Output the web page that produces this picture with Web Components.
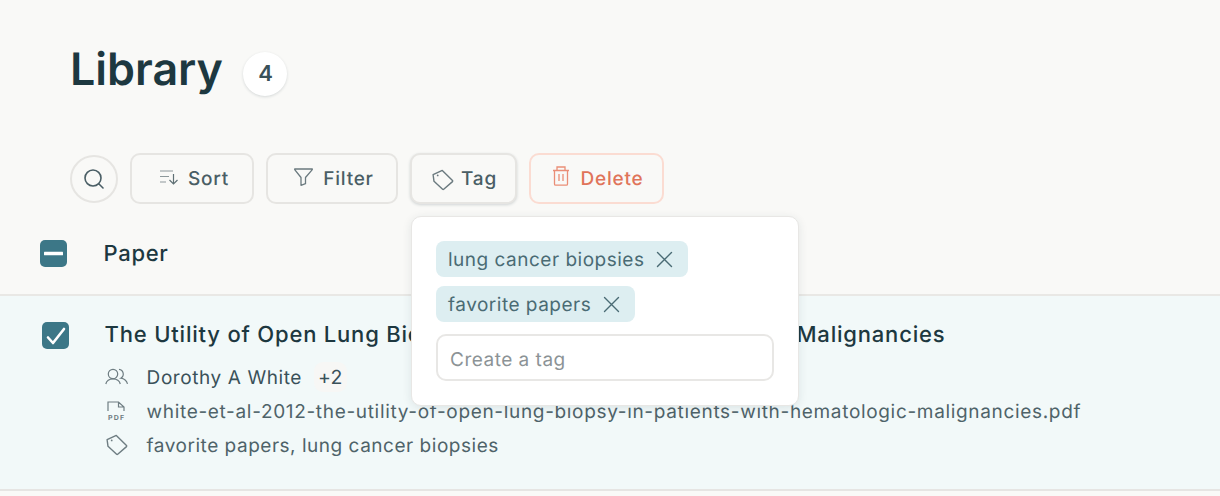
<!DOCTYPE html>
<html lang="en"><head><meta charset="utf-8"><title>Library</title>
<style>
html,body{margin:0;padding:0;background:#f9f9f7;}
body{width:1220px;height:496px;overflow:hidden;font-family:Inter,"Noto Sans",sans-serif;color:#1e3a42;text-rendering:geometricPrecision;}
</style></head><body>
<library-page></library-page>
<script>
const TAG=(w,h)=>`<svg width="${w}" height="${h}" viewBox="0 0 24 24" fill="none" stroke="currentColor" stroke-width="1.4" stroke-linejoin="round"><path d="M2.100 6.700 11.300 2.400l10.200 10.100a.8.8 0 0 1 0 1.100l-8.800 7.700a.8.8 0 0 1-1.100 0L3 13.300z"/><circle cx="6.700" cy="7.400" r=".9" fill="currentColor" stroke="none"/></svg>`;
const I={
search:'<svg width="24" height="24" viewBox="0 0 24 24" fill="none" stroke="currentColor" stroke-width="1.6" stroke-linecap="round"><circle cx="11" cy="11" r="8"/><path d="M17 17l4 4"/></svg>',
sort:'<svg width="19" height="16" viewBox="0 0 19 16" fill="none" stroke-width="1.200"><path d="M0 2h13M0 7.500h9M0 13h6" stroke="#8d989b"/><path d="M13.500 5v10M9.500 11l4 4 4-4" stroke="#5f7075"/></svg>',
filter:'<svg width="19" height="18" viewBox="0 0 19 18" fill="none" stroke="currentColor" stroke-width="1.300" stroke-linejoin="round" style="margin-top:2px"><path d="M.7 1h17.600v.6L11.500 9.500v6.200l-4.500 1.600V9.500L.7 1.600z"/></svg>',
tag:TAG(24,24),
trash:'<svg width="18" height="20" viewBox="0 0 18 20" fill="none" stroke="#ea8e77" stroke-width="1.300" style="margin-top:-1px"><path d="M1 4.500h16M2.500 4.500V18a1.200 1.200 0 0 0 1.200 1.200h10.600a1.200 1.200 0 0 0 1.200-1.200V4.500M5 4.500V1h8v3.500M7 8v7M11 8v7"/></svg>',
x:'<svg width="17" height="17" viewBox="0 0 17 17" fill="none" stroke="currentColor" stroke-width="1.400" stroke-linecap="round"><path d="M1.500 1.500l14 14M15.500 1.500l-14 14"/></svg>',
users:'<svg width="24" height="18" viewBox="0 0 24 18" fill="none" stroke="currentColor" stroke-width="1.200"><circle cx="8" cy="6" r="4.700"/><path d="M.8 16c.8-3.200 3.500-5 7.200-5s6.500 1.800 7.300 5M14 1.400a4.700 4.700 0 0 1 1.800 8.800c3.300.5 5.800 2.500 6.700 5.600"/></svg>',
pdf:'<svg width="21" height="21" viewBox="0 0 21 21" fill="none"><path d="M3 10V1h10.500l5.500 5v4M13.500 1v5H19" stroke="currentColor" stroke-width="1.200"/><text x="3" y="19" font-family="Inter,sans-serif" font-size="7" font-weight="700" letter-spacing="1.200" fill="currentColor">PDF</text></svg>'
};
function def(name,css,html){
  customElements.define(name,class extends HTMLElement{
    constructor(){super();const r=this.attachShadow({mode:'open'});
      r.innerHTML='<style>'+css+'</style>'+(typeof html==='function'?html(this):html);}
  });
}
def('count-badge',`:host{display:flex;width:44px;height:44px;border-radius:50%;background:#fff;box-shadow:0 1px 3px rgba(30,50,60,.16);align-items:center;justify-content:center;font-size:22px;font-weight:600;color:#3a5159;}`,'<slot></slot>');
def('page-title',`:host{display:flex;align-items:center;gap:20.500px;height:44px;}
h1{margin:0 0 10px;font-size:44.8px;font-weight:600;color:#1d3840;line-height:44px;}`,'<h1><slot></slot></h1><count-badge><slot name="n"></slot></count-badge>');
def('tool-btn',`:host{display:inline-flex;box-sizing:border-box;height:51px;align-items:center;justify-content:center;gap:var(--g,9px);border:2px solid #e6e5e2;border-radius:10px;font-size:19px;font-weight:500;letter-spacing:.75px;color:#4a5e65;background:#f9f9f7;padding-left:var(--p,0);}
:host([danger]){border-color:#fbdcd2;color:#e0745a;}
:host([active]){box-shadow:0 1px 3px rgba(30,50,60,.18);}
span{display:flex;color:#6b7a7f;}`,'<span><slot name="i"></slot></span><slot></slot>');
def('search-btn',`:host{display:flex;box-sizing:border-box;width:48px;height:48px;border-radius:50%;border:2px solid #e6e5e2;align-items:center;justify-content:center;color:#4a5e65;}`,I.search);
def('tool-bar',`:host{display:flex;align-items:center;gap:12px;height:51px;}`,'<slot></slot>');
def('check-box',`:host{display:flex;width:27px;height:27px;border-radius:5px;background:#3c7787;align-items:center;justify-content:center;flex:none;}`,
 e=>e.hasAttribute('mixed')?'<svg width="19" height="5" viewBox="0 0 19 5"><rect width="19" height="3.500" y=".7" rx=".5" fill="#fff"/></svg>':'<svg width="20" height="18" viewBox="0 0 20 18" fill="none" stroke="#fff" stroke-width="2.600" stroke-linecap="round" stroke-linejoin="round"><path d="M2 10.500 7 16 18 2"/></svg>');
def('tag-chip',`:host{display:inline-flex;align-items:center;gap:12px;box-sizing:border-box;height:36px;padding:0 15px 0 12px;background:#ddeef1;border-radius:8px;font-size:19px;letter-spacing:.5px;color:#4a6b74;align-self:flex-start;}
span{display:flex;}`,'<slot></slot><span>'+I.x+'</span>');
def('tag-popover',`:host{position:absolute;left:411px;top:216px;box-sizing:border-box;width:388px;height:190px;background:#fff;border:1px solid #e8e7e5;border-radius:10px;box-shadow:0 2px 10px rgba(30,50,60,.1);padding:24px 24px 0 24px;display:flex;flex-direction:column;gap:9px;z-index:5;}
.in{margin-top:3px;box-sizing:border-box;height:47px;border:2px solid #e8e7e5;border-radius:10px;display:flex;align-items:center;padding:3px 0 0 12px;font-size:19px;letter-spacing:.5px;color:#8c9396;}`,'<slot></slot><div class="in">Create a tag</div>');
def('meta-row',`:host{display:flex;align-items:center;height:34px;font-size:19px;letter-spacing:.52px;color:#4f6369;white-space:nowrap;}
.i{width:42px;display:flex;color:#6e7d82;flex:none;}
:host([strong]){color:#3a5159;letter-spacing:.58px;}
:host([file]){letter-spacing:.67px;}`,'<div class="i"><slot name="i"></slot></div><slot></slot>');
def('more-pill',`:host{display:inline-flex;align-items:center;justify-content:center;height:30px;width:33px;margin-left:12px;border-radius:9px;background:#f7f7f5;font-size:19.5px;color:#3a5159;letter-spacing:.3px;}`,'<slot></slot>');
def('table-head',`:host{display:flex;align-items:center;height:92px;padding:9px 0 0 40px;gap:36.5px;font-size:22px;font-weight:500;letter-spacing:.7px;color:#1d3840;box-sizing:border-box;border-bottom:2px solid #e9e8e5;}`,'<slot></slot>');
def('paper-row',`:host{display:flex;box-sizing:border-box;height:195px;background:#f2f9f9;border-bottom:2px solid #e6e5e3;padding:26px 0 0 42px;gap:35.6px;}
.b{display:flex;flex-direction:column;min-width:0;}
.t{font-size:22px;font-weight:500;letter-spacing:.8px;color:#1d3840;line-height:26px;white-space:nowrap;margin-bottom:12px;}`,'<slot name="c"></slot><div class="b"><div class="t"><slot name="t"></slot></div><slot></slot></div>');
def('library-page',`:host{display:block;position:relative;width:1220px;height:496px;}
.top{padding:52px 70px 0;}
.bar{padding:57px 70px 0;}`,`
<div class="top"><page-title>Library<span slot="n">4</span></page-title></div>
<div class="bar"><tool-bar>
  <search-btn></search-btn>
  <tool-btn style="width:124px;--p:5px"><span slot="i">${I.sort}</span>Sort</tool-btn>
  <tool-btn style="width:132px;--g:10px;--p:4px"><span slot="i">${I.filter}</span>Filter</tool-btn>
  <tool-btn active style="width:107px;--g:6px;--p:1px"><span slot="i"><span style="display:flex;margin-top:2px">${I.tag}</span></span>Tag</tool-btn>
  <tool-btn danger style="width:135px;--g:11px;--p:2px"><span slot="i">${I.trash}</span>Delete</tool-btn>
</tool-bar></div>
<table-head><check-box mixed></check-box><span>Paper</span></table-head>
<paper-row>
  <check-box slot="c"></check-box>
  <span slot="t">The Utility of Open Lung Biopsy in Patients with Hematologic Malignancies</span>
  <meta-row strong><span slot="i" style="display:flex">${I.users}</span>Dorothy A White<more-pill>+2</more-pill></meta-row>
  <meta-row file><span slot="i" style="display:flex">${I.pdf}</span>white-et-al-2012-the-utility-of-open-lung-biopsy-in-patients-with-hematologic-malignancies.pdf</meta-row>
  <meta-row><span slot="i" style="display:flex">${I.tag}</span>favorite papers, lung cancer biopsies</meta-row>
</paper-row>
<tag-popover><tag-chip>lung cancer biopsies</tag-chip><tag-chip>favorite papers</tag-chip></tag-popover>`);
</script></body></html>
